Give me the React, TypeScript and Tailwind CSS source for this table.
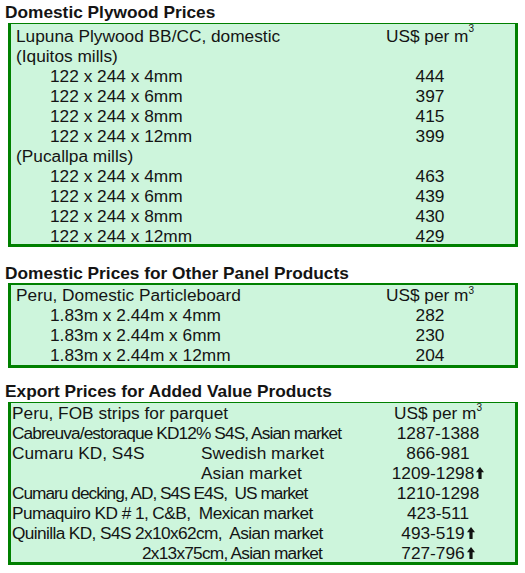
import React from "react";

const Up = () => (
  <svg width="8" height="12" viewBox="0 0 8 12" className="inline-block ml-[2px]" style={{ verticalAlign: "baseline" }}>
    <path d="M4 0 L8 5.2 L5.6 5.2 L5.6 12 L2.4 12 L2.4 5.2 L0 5.2 Z" fill="#111" />
  </svg>
);

const Unit = ({ shift }: { shift: string }) => (
  <span>
    US$ per m<span className={`relative text-[10px] ${shift}`}>3</span>
  </span>
);

const Row1 = ({ label, value, indent = false }: { label: React.ReactNode; value?: React.ReactNode; indent?: boolean }) => (
  <div className="flex h-[20px]">
    <div className={`flex-1 whitespace-pre ${indent ? "pl-[34px]" : ""}`}>{label}</div>
    <div className="w-[170px] text-center whitespace-pre">{value}</div>
  </div>
);

const Row3 = ({ children, value }: { children: React.ReactNode; value?: React.ReactNode }) => (
  <div className="flex h-[20px]">
    <div className="flex-1 flex whitespace-pre">{children}</div>
    <div className="w-[154px] text-center whitespace-pre">{value}</div>
  </div>
);

export default function App() {
  return (
    <div
      className="w-[525px] h-[573px] bg-white text-[#141414] text-[17.3px] leading-[20px]"
      style={{ fontFamily: '"Liberation Sans", Arial, sans-serif' }}
    >
      <div className="pt-[2px] pl-[5px] font-bold h-[23px]">Domestic Plywood Prices</div>
      <div className="ml-[8px] w-[510px] h-[224px] bg-[#cdf5dc] border-[#008000] border-l-[3px] border-r-[3px] border-b-[3px] border-t-[1px] pt-[2px] pl-[5px]">
        <Row1 label="Lupuna Plywood BB/CC, domestic" value={<Unit shift="top-[-10px]" />} />
        <Row1 label="(Iquitos mills)" />
        <Row1 indent label="122 x 244 x 4mm" value="444" />
        <Row1 indent label="122 x 244 x 6mm" value="397" />
        <Row1 indent label="122 x 244 x 8mm" value="415" />
        <Row1 indent label="122 x 244 x 12mm" value="399" />
        <Row1 label="(Pucallpa mills)" />
        <Row1 indent label="122 x 244 x 4mm" value="463" />
        <Row1 indent label="122 x 244 x 6mm" value="439" />
        <Row1 indent label="122 x 244 x 8mm" value="430" />
        <Row1 indent label="122 x 244 x 12mm" value="429" />
      </div>

      <div className="mt-[16px] pl-[5px] font-bold h-[20px]">Domestic Prices for Other Panel Products</div>
      <div className="ml-[8px] w-[510px] h-[85px] bg-[#cdf5dc] border-[#008000] border-l-[3px] border-r-[3px] border-b-[3px] border-t-[2px] pl-[5px]">
        <Row1 label="Peru, Domestic Particleboard" value={<Unit shift="top-[-7px]" />} />
        <Row1 indent label="1.83m x 2.44m x 4mm" value="282" />
        <Row1 indent label="1.83m x 2.44m x 6mm" value="230" />
        <Row1 indent label="1.83m x 2.44m x 12mm" value="204" />
      </div>

      <div className="mt-[13px] pl-[5px] font-bold h-[21px]">Export Prices for Added Value Products</div>
      <div className="ml-[8px] w-[510px] h-[163px] bg-[#cdf5dc] border-[#008000] border-l-[3px] border-r-[3px] border-b-[3px] border-t-[1px] pl-[1px]">
        <Row3 value={<Unit shift="top-[-8px]" />}>Peru, FOB strips for parquet</Row3>
        <Row3 value="1287-1388">
          <span className="tracking-[-0.9px]">Cabreuva/estoraque KD12% S4S, Asian market</span>
        </Row3>
        <Row3 value="866-981">
          <span className="w-[189px] shrink-0">Cumaru KD, S4S</span>
          <span>Swedish market</span>
        </Row3>
        <Row3 value={<>1209-1298<Up /></>}>
          <span className="w-[189px] shrink-0"></span>
          <span>Asian market</span>
        </Row3>
        <Row3 value="1210-1298">
          <span className="tracking-[-1px]">Cumaru decking, AD, S4S E4S,  US market</span>
        </Row3>
        <Row3 value="423-511">
          <span className="tracking-[-0.58px]">Pumaquiro KD # 1, C&amp;B,  Mexican market</span>
        </Row3>
        <Row3 value={<>493-519<Up /></>}>
          <span className="tracking-[-0.62px]">Quinilla KD, S4S 2x10x62cm,  Asian market</span>
        </Row3>
        <Row3 value={<>727-796<Up /></>}>
          <span className="pl-[130px] tracking-[-0.77px]">2x13x75cm, Asian market</span>
        </Row3>
      </div>
    </div>
  );
}
